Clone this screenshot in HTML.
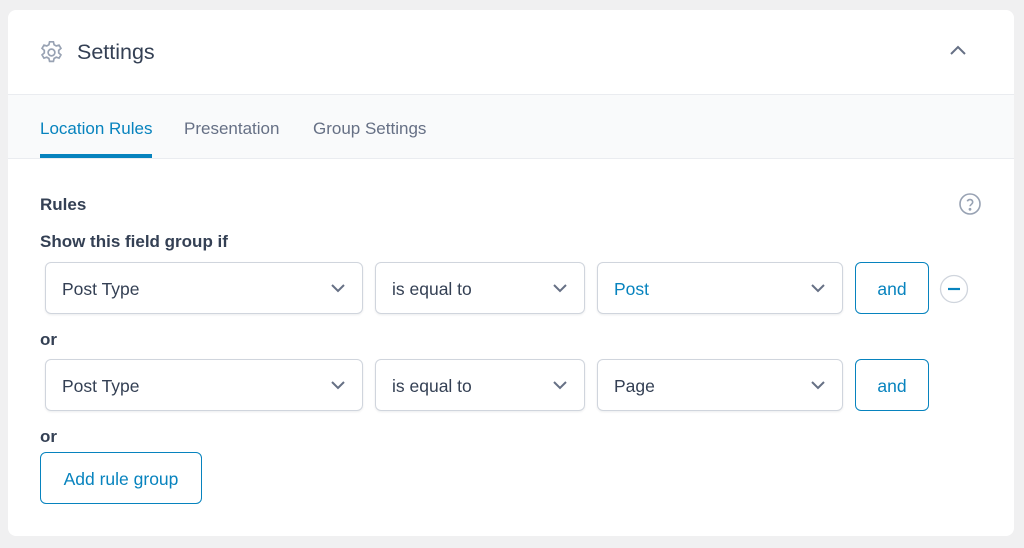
<!DOCTYPE html>
<html><head><meta charset="utf-8"><style>
*{box-sizing:border-box;margin:0;padding:0}
body{width:1024px;height:548px;background:#f0f0f1;font-family:"Liberation Sans",sans-serif;position:relative;overflow:hidden}
.card{position:absolute;left:8px;top:10px;width:1006px;height:526px;background:#fff;border-radius:8px;overflow:hidden}
.a{position:absolute}
.tabs{left:0;top:84px;width:1006px;height:65px;background:#f9fafb;border-top:1px solid #eaecf0;border-bottom:1px solid #eaecf0}
.sel{position:absolute;height:52px;border:1px solid #d0d5dd;border-radius:6px;box-shadow:0 1px 2px rgba(16,24,40,.08);font-size:17.5px;color:#344054;padding-left:16px;line-height:52px}
.sel svg{position:absolute;right:16px;top:20px}
.btn{position:absolute;border:1px solid #0783be;border-radius:6px;color:#0783be;font-size:17.5px;text-align:center;line-height:52px;height:52px}
.lbl{position:absolute;font-size:17px;font-weight:bold;color:#344054}
</style></head><body>
<div class="card">
<svg class="a" style="left:30px;top:29px" width="27" height="27" viewBox="0 0 24 24" fill="none" stroke="#98a2b3" stroke-width="1.5"><circle cx="12" cy="12" r="3"/><path d="M10.3 2.5h3.4l.6 2.6 1.9 1.1 2.5-.8 1.7 2.9-2 1.8v2.2l2 1.8-1.7 2.9-2.5-.8-1.9 1.1-.6 2.6h-3.4l-.6-2.6-1.9-1.1-2.5.8-1.7-2.9 2-1.8v-2.2l-2-1.8 1.7-2.9 2.5.8 1.9-1.1z"/></svg>
<div class="a" style="left:69px;top:30px;font-size:21.5px;color:#344054">Settings</div>
<svg class="a" style="left:941px;top:35px" width="18" height="12" viewBox="0 0 18 12" fill="none" stroke="#667085" stroke-width="2"><path d="M2 9l7-7 7 7"/></svg>
<div class="a tabs">
<div class="a" style="left:32px;top:24px;font-size:17px;color:#0783be">Location Rules</div>
<div class="a" style="left:176px;top:24px;font-size:17px;color:#667085">Presentation</div>
<div class="a" style="left:305px;top:24px;font-size:17px;color:#667085">Group Settings</div>
<div class="a" style="left:32px;top:59px;width:112px;height:4px;background:#0783be"></div>
</div>
<div class="lbl" style="left:32px;top:185px">Rules</div>
<svg class="a" style="left:950px;top:182px" width="24" height="24" viewBox="0 0 24 24" fill="none" stroke="#98a2b3" stroke-width="1.6"><circle cx="12" cy="12" r="10"/><path d="M9.3 9.3a2.8 2.8 0 015.4 1c0 1.8-2.7 2.4-2.7 4"/><circle cx="12" cy="17.3" r=".6" fill="#98a2b3"/></svg>
<div class="lbl" style="left:32px;top:222px">Show this field group if</div>
<div class="sel" style="left:37px;top:252px;width:318px">Post Type<svg width="16" height="10" viewBox="0 0 16 10" fill="none" stroke="#667085" stroke-width="2"><path d="M2 2l6 6 6-6"/></svg></div>
<div class="sel" style="left:367px;top:252px;width:210px">is equal to<svg width="16" height="10" viewBox="0 0 16 10" fill="none" stroke="#667085" stroke-width="2"><path d="M2 2l6 6 6-6"/></svg></div>
<div class="sel" style="left:589px;top:252px;width:246px;color:#0783be">Post<svg width="16" height="10" viewBox="0 0 16 10" fill="none" stroke="#667085" stroke-width="2"><path d="M2 2l6 6 6-6"/></svg></div>
<div class="btn" style="left:847px;top:252px;width:74px">and</div>
<svg class="a" style="left:931px;top:264px" width="30" height="30" viewBox="0 0 30 30"><circle cx="15" cy="15" r="13.5" fill="#fff" stroke="#d0d5dd" stroke-width="1.3"/><path d="M9 15h12" stroke="#0783be" stroke-width="2.2"/></svg>
<div class="lbl" style="left:32px;top:320px">or</div>
<div class="sel" style="left:37px;top:349px;width:318px">Post Type<svg width="16" height="10" viewBox="0 0 16 10" fill="none" stroke="#667085" stroke-width="2"><path d="M2 2l6 6 6-6"/></svg></div>
<div class="sel" style="left:367px;top:349px;width:210px">is equal to<svg width="16" height="10" viewBox="0 0 16 10" fill="none" stroke="#667085" stroke-width="2"><path d="M2 2l6 6 6-6"/></svg></div>
<div class="sel" style="left:589px;top:349px;width:246px">Page<svg width="16" height="10" viewBox="0 0 16 10" fill="none" stroke="#667085" stroke-width="2"><path d="M2 2l6 6 6-6"/></svg></div>
<div class="btn" style="left:847px;top:349px;width:74px">and</div>
<div class="lbl" style="left:32px;top:417px">or</div>
<div class="btn" style="left:32px;top:442px;width:162px">Add rule group</div>
</div>
</body></html>
